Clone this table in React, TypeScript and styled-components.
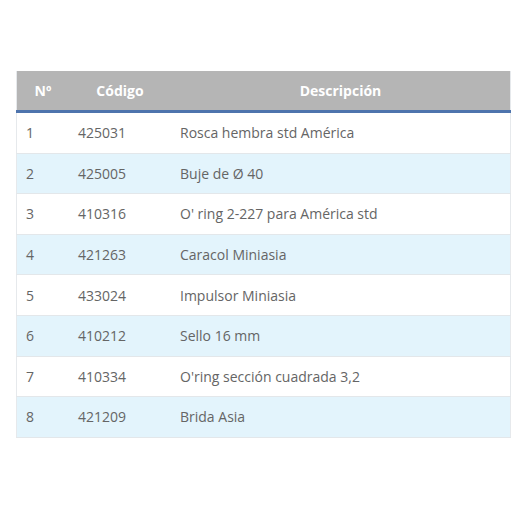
import React from "react";
import styled, { createGlobalStyle } from "styled-components";

const Global = createGlobalStyle`
  html, body { margin: 0; padding: 0; background: #ffffff; }
  body { font-family: "Open Sans", "Liberation Sans", sans-serif; }
`;

const Page = styled.div`
  width: 530px;
  height: 530px;
  box-sizing: border-box;
  padding: 71px 19px 0 16px;
`;

const Table = styled.table`
  width: 495px;
  border-collapse: collapse;
  table-layout: fixed;
  font-family: "Open Sans", "Liberation Sans", sans-serif;
  font-size: 14px;
  border: 1px solid #e6e9ec;
  border-top: none;
`;

const HeadRow = styled.tr`
  background: #b5b5b5;
  border-bottom: 3px solid #4e74ad;
`;

const Th = styled.th<{ $w?: number }>`
  ${(p) => (p.$w ? `width: ${p.$w}px;` : "")}
  height: 39px;
  padding: 0;
  color: #ffffff;
  font-weight: 700;
  font-size: 14px;
  text-align: center;
  vertical-align: middle;
`;

const Row = styled.tr<{ $alt: boolean }>`
  background: ${(p) => (p.$alt ? "#e3f4fc" : "#ffffff")};
  border-bottom: 1px solid #e3e7ea;
`;

const Td = styled.td`
  height: 39.6px;
  padding: 0 9px;
  color: #656565;
  font-size: 14px;
  text-align: left;
  vertical-align: middle;
  white-space: nowrap;
`;

const rows: [string, string, string][] = [
  ["1", "425031", "Rosca hembra std América"],
  ["2", "425005", "Buje de Ø 40"],
  ["3", "410316", "O' ring 2-227 para América std"],
  ["4", "421263", "Caracol Miniasia"],
  ["5", "433024", "Impulsor Miniasia"],
  ["6", "410212", "Sello 16 mm"],
  ["7", "410334", "O'ring sección cuadrada 3,2"],
  ["8", "421209", "Brida Asia"],
];

export default function App() {
  return (
    <>
      <Global />
      <Page>
        <Table>
          <thead>
            <HeadRow>
              <Th $w={52}>Nº</Th>
              <Th $w={102}>Código</Th>
              <Th>Descripción</Th>
            </HeadRow>
          </thead>
          <tbody>
            {rows.map((r, i) => (
              <Row key={r[0]} $alt={i % 2 === 1}>
                <Td>{r[0]}</Td>
                <Td>{r[1]}</Td>
                <Td>{r[2]}</Td>
              </Row>
            ))}
          </tbody>
        </Table>
      </Page>
    </>
  );
}
